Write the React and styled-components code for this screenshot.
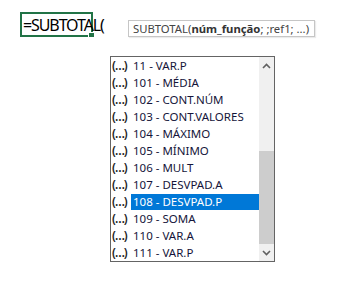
import React from 'react';
import styled, { createGlobalStyle } from 'styled-components';

const GlobalStyle = createGlobalStyle`
  html, body {
    margin: 0;
    padding: 0;
    background: #fff;
  }
  body {
    font-family: "Noto Sans", "Open Sans", sans-serif;
  }
`;

const items = [
  '11 - VAR.P',
  '101 - MÉDIA',
  '102 - CONT.NÚM',
  '103 - CONT.VALORES',
  '104 - MÁXIMO',
  '105 - MÍNIMO',
  '106 - MULT',
  '107 - DESVPAD.A',
  '108 - DESVPAD.P',
  '109 - SOMA',
  '110 - VAR.A',
  '111 - VAR.P',
];

const Page = styled.div`
  width: 353px;
  height: 298px;
  padding: 12px 0 0 20px;
  box-sizing: border-box;
  display: flex;
  flex-direction: column;
`;

const TopRow = styled.div`
  display: flex;
  align-items: flex-start;
`;

const Cell = styled.div`
  position: relative;
  width: 73px;
  height: 25px;
  box-sizing: border-box;
  border: 2px solid #217346;
  display: flex;
  align-items: center;
`;

const CellText = styled.span`
  font-size: 16px;
  color: #000;
  white-space: nowrap;
  padding-left: 1px;
  letter-spacing: -1.1px;
`;

const FillHandle = styled.div`
  position: absolute;
  right: -3px;
  bottom: -3px;
  width: 5px;
  height: 4px;
  background: #217346;
  border: 1px solid #fff;
  border-right: none;
`;

const Tooltip = styled.div`
  margin: 8px 0 0 35px;
  height: 15px;
  padding: 0 5px 0 4px;
  border: 1px solid #c6c6c6;
  box-shadow: 1px 1px 1px rgba(0, 0, 0, 0.08);
  font-size: 11.3px;
  line-height: 15px;
  color: #444;
  white-space: nowrap;
  background: #fff;

  b {
    font-weight: 700;
    color: #333;
  }
`;

const Dropdown = styled.div`
  margin: 19px 0 0 90px;
  width: 165px;
  height: 206px;
  box-sizing: border-box;
  border: 1px solid #646464;
  display: flex;
`;

const List = styled.div`
  flex: 1;
  display: flex;
  flex-direction: column;
`;

const Row = styled.div`
  height: 17px;
  display: flex;
  align-items: center;
  font-size: 11.5px;
  color: #15153a;
  white-space: nowrap;
`;

const Icon = styled.span`
  width: 19px;
  padding-left: 1px;
  flex: none;
  font-size: 12px;
  font-weight: 600;
  color: #222;
  letter-spacing: -1px;
`;

const Label = styled.span`
  flex: 1;
  height: 16px;
  display: flex;
  align-items: center;
  padding-left: 2px;
  background: ${(p) => (p.$active ? '#0078d7' : 'transparent')};
  color: ${(p) => (p.$active ? '#fff' : 'inherit')};
`;

const Scrollbar = styled.div`
  width: 15px;
  background: #f0f0f0;
  display: flex;
  flex-direction: column;
  align-items: stretch;
`;

const Arrow = styled.div`
  height: 17px;
  display: flex;
  align-items: center;
  justify-content: center;
`;

const Track = styled.div`
  flex: 1;
  display: flex;
  flex-direction: column;
`;

const Thumb = styled.div`
  margin-top: ${(p) => p.$top}px;
  height: ${(p) => p.$size}px;
  background: #cdcdcd;
`;

const Chevron = ({ up }) => (
  <svg width="9" height="6" viewBox="0 0 9 6">
    <path
      d={up ? 'M1 5 L4.5 1.5 L8 5' : 'M1 1 L4.5 4.5 L8 1'}
      fill="none"
      stroke="#606060"
      strokeWidth="1.6"
    />
  </svg>
);

function App() {
  return (
    <>
      <GlobalStyle />
      <Page>
        <TopRow>
          <Cell>
            <CellText>=SUBTOTAL(</CellText>
            <FillHandle />
          </Cell>
          <Tooltip>
            SUBTOTAL(<b>núm_função</b>; ;ref1; ...)
          </Tooltip>
        </TopRow>
        <Dropdown>
          <List>
            {items.map((item) => (
              <Row key={item}>
                <Icon>(…)</Icon>
                <Label $active={item === '108 - DESVPAD.P'}>{item}</Label>
              </Row>
            ))}
          </List>
          <Scrollbar>
            <Arrow>
              <Chevron up />
            </Arrow>
            <Track>
              <Thumb $top={77} $size={93} />
            </Track>
            <Arrow>
              <Chevron />
            </Arrow>
          </Scrollbar>
        </Dropdown>
      </Page>
    </>
  );
}

export default App;
